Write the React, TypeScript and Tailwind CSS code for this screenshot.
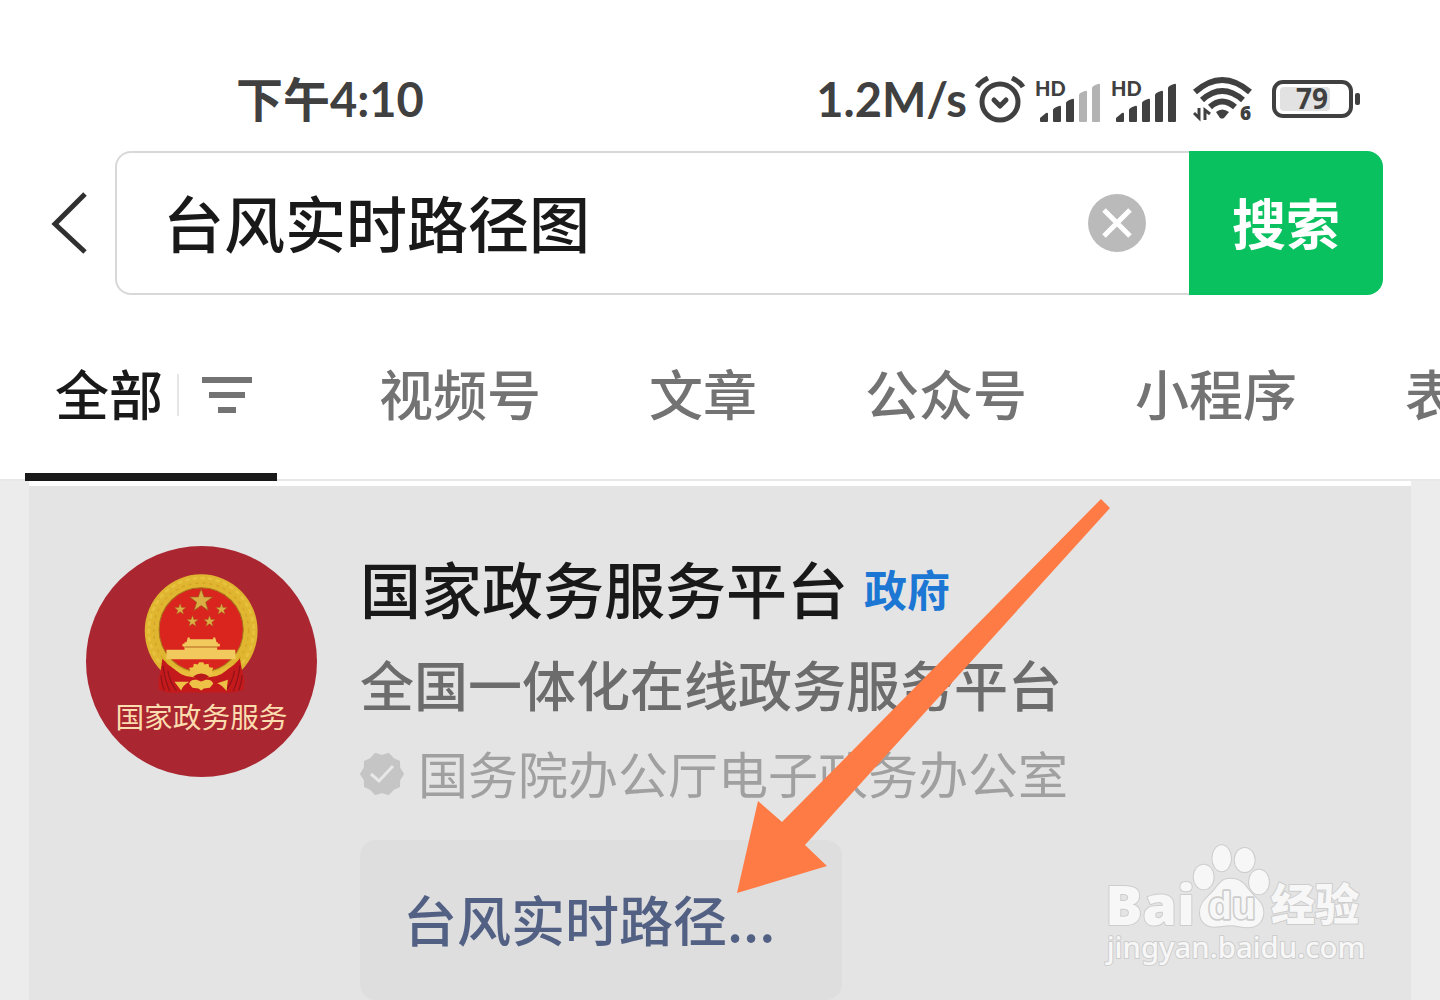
import React from 'react';

const tabs = [
    { id: '1', name: '视频号' },
    { id: '2', name: '文章' },
    { id: '3', name: '公众号' },
    { id: '4', name: '小程序' },
    { id: '5', name: '表情' },
];

const Signal = ({ bars }: { bars: number }) => {
    const shapes = [
        'M2 41v-3l6-5q2-1 2 1v7q0 1-1 1H3q-1 0-1-1z',
        'M15 41V30q0-2 6-4 2-1 2 1v14q0 1-1 1h-6q-1 0-1-1z',
        'M28 41V23q0-2 6-4 2-1 2 1v21q0 1-1 1h-6q-1 0-1-1z',
        'M41 41V15q0-2 6-4 2-1 2 1v29q0 1-1 1h-6q-1 0-1-1z',
        'M54 41V8q0-2 6-4 2-1 2 1v36q0 1-1 1h-6q-1 0-1-1z',
    ];
    return (
        <svg width="70" height="50" viewBox="-5 -5 70 50">
            {shapes.map((d, index) => (
                <path
                    key={d}
                    d={d}
                    fill={index < bars ? '#404040' : '#b3b3b3'}
                />
            ))}
            <text
                x="-3"
                y="16"
                fontFamily="Lato, sans-serif"
                fontSize="20"
                fontWeight="900"
                fill="#404040"
            >
                HD
            </text>
        </svg>
    );
};

const Alarm = () => (
    <svg
        width="50"
        height="48"
        viewBox="0 0 50 48"
        fill="none"
        stroke="#404040"
        strokeWidth="5"
    >
        <circle cx="25" cy="26" r="18" />
        <path
            d="M19 24l6 6 6-6"
            strokeLinecap="round"
            strokeLinejoin="round"
        />
        <path d="M2 11Q5 6 13 2M37 2q8 4 11 9" />
    </svg>
);

const Wifi = () => (
    <svg width="62" height="52" viewBox="0 -2 62 52">
        <g fill="none" stroke="#404040" strokeWidth="6">
            <path d="M2 16Q29-8 57 16" />
            <path d="M9 24Q29 6 50 24" />
            <path d="M17 31Q29 20 42 31" />
        </g>
        <path d="M23 36q6-5 13 0l-5 6q-2 1-4 0z" fill="#404040" />
        <path
            d="M1 37l5 5V32M12 44V34l5 4"
            fill="none"
            stroke="#404040"
            strokeWidth="3"
        />
        <text
            x="47"
            y="44"
            fontFamily="Open Sans, sans-serif"
            fontSize="19"
            fontWeight="800"
            fill="#404040"
        >
            6
        </text>
    </svg>
);

const Battery = () => (
    <svg width="90" height="40" viewBox="0 0 90 40">
        <rect
            x="3"
            y="2"
            width="77"
            height="34"
            rx="9"
            fill="none"
            stroke="#404040"
            strokeWidth="4"
        />
        <rect x="9" y="7" width="50" height="24" rx="4" fill="#e2e2e2" />
        <rect x="84" y="13" width="5" height="12" rx="2" fill="#404040" />
        <text
            x="41"
            y="29"
            textAnchor="middle"
            fontFamily="Open Sans, sans-serif"
            fontSize="28"
            fontWeight="700"
            fill="#404040"
        >
            79
        </text>
    </svg>
);

const Star = ({ x, y, r }: { x: number; y: number; r: number }) => (
    <path
        transform={`translate(${x} ${y}) scale(${r})`}
        d="M0-1L.24-.32.95-.31.38.12.59.81 0 .4-.59.81-.38.12-.95-.31-.24-.32z"
        fill="#d9ae45"
        stroke="#9c5a1c"
        strokeWidth=".06"
    />
);

const Emblem = () => (
    <svg
        viewBox="19 17 692 692"
        className="size-[231px] shrink-0"
        role="img"
        aria-label="国家政务服务"
    >
        <circle cx="365" cy="363" r="346" fill="#aa2732" />
        <circle cx="364" cy="271" r="169" fill="#e0b52f" />
        <circle
            cx="364"
            cy="270"
            r="157"
            fill="none"
            stroke="#f0d050"
            strokeWidth="8"
            strokeDasharray="14 9"
            opacity=".5"
        />
        <circle
            cx="364"
            cy="270"
            r="142"
            fill="none"
            stroke="#c8961f"
            strokeWidth="4"
            strokeDasharray="9 12"
            opacity=".5"
        />
        <circle
            cx="364"
            cy="268"
            r="126"
            fill="#d9251e"
            stroke="#a8701c"
            strokeWidth="3"
        />
        <Star x={364} y={181} r={36} />
        <Star x={301} y={207} r={18} />
        <Star x={425} y={207} r={18} />
        <Star x={338} y={243} r={18} />
        <Star x={389} y={243} r={18} />
        <path
            d="M324 291h6v5h70v-5h6l4 14h4v5h6v8h-8v10h54l2 28H260v-28h54v-10h-6v-8h6v-5h6z"
            fill="#f1c95c"
        />
        <path d="M316 318h96v3h-96z" fill="#b5651c" />
        <path
            d="M248 354q26 34 70 46 22 8 46 4 24 4 46-4 44-12 70-46 6 38 14 66-4 14-2 26-30 14-60 10H296q-34 4-60-10 2-14 0-26 8-32 12-66z"
            fill="#c51a1c"
        />
        <path
            d="M250 376q4 40 20 76M264 390q6 34 26 60M480 376q-4 40-20 76M464 390q-6 34-26 60M244 404q0 20 10 46M486 404q0 20-10 46"
            fill="none"
            stroke="#93131a"
            strokeWidth="4"
        />
        <path
            d="M272 372q44 28 92 24 48 4 92-24-30 40-72 38l-20-6-20 6q-42 2-72-38z"
            fill="#e9bd3c"
        />
        <path
            d="M332 394l-4-12 12-2 2-10 12 2 4-7h12l4 7 12-2 2 10 12 2-4 12 4 8-36 6-36-6z"
            fill="#edc247"
        />
        <path d="M340 408q24-18 48 0l-24 10z" fill="#b81a1b" />
        <path
            d="M284 424l44 0q-20 12-24 26zM444 418l-4 34q-12-18-28-24zM328 430q4-14 22-12l14 5 14-5q18-2 22 12l-10 12-18 2-8 6-8-6-18-2z"
            fill="#edc247"
        />
        <text
            x="365"
            y="562"
            textAnchor="middle"
            fontFamily="Noto Sans CJK SC, sans-serif"
            fontSize="86"
            fontWeight="400"
            fill="#fbdcae"
        >
            国家政务服务
        </text>
    </svg>
);

const Verified = () => (
    <svg width="44" height="52" viewBox="-22 -28 44 52" className="shrink-0">
        <path
            d="M0-18L6.5-20 11-15.200 17-12.400 17.200-5.900 21 0 17.200 5.900 17 12.400 11 15.200 6.500 20 0 18-6.500 20-11 15.200-17 12.400-17.200 5.900-21 0-17.200-5.900-17-12.400-11-15.200-6.500-20z"
            fill="#c5c5c5"
            stroke="#c5c5c5"
            strokeWidth="2"
            strokeLinejoin="round"
        />
        <path
            d="M-11 0l8 7L11-8"
            fill="none"
            stroke="#e8e8e8"
            strokeWidth="3"
        />
    </svg>
);

const Watermark = () => (
    <svg
        viewBox="0 0 870 450"
        className="absolute right-[31px] top-[343px] w-[290px]"
        fill="#f7f7f7"
        stroke="#cdcdcd"
        strokeWidth="6"
        strokeLinejoin="round"
        paintOrder="stroke"
    >
        <text
            x="46"
            y="287"
            fontFamily="Open Sans, sans-serif"
            fontSize="166"
            fontWeight="800"
        >
            Bai
        </text>
        <ellipse cx="341" cy="144" rx="30" ry="37" />
        <ellipse cx="395" cy="88" rx="28" ry="39" />
        <ellipse cx="464" cy="93" rx="30" ry="36" />
        <ellipse cx="507" cy="159" rx="30" ry="37" />
        <path d="M420 149c-28 0-38 24-52 40-20 20-38 34-38 62 0 26 18 42 44 42 18 0 32-4 48-4s32 6 52 6c28 0 46-18 46-46 0-30-26-42-44-66-14-20-26-34-56-34z" />
        <text
            x="355"
            y="270"
            fontFamily="Liberation Sans, sans-serif"
            fontSize="116"
            fontWeight="700"
            strokeWidth="10"
        >
            du
        </text>
        <text
            x="542"
            y="277"
            fontFamily="Noto Sans CJK SC, sans-serif"
            fontSize="133"
            fontWeight="900"
        >
            经验
        </text>
        <text
            x="50"
            y="388"
            fontFamily="Noto Sans, sans-serif"
            fontSize="88"
            fontWeight="500"
        >
            jingyan.baidu.com
        </text>
    </svg>
);

const App = () => {
    return (
        <div
            lang="zh-CN"
            className="min-h-screen overflow-hidden bg-[#ececec] font-['Noto_Sans_CJK_SC',sans-serif] font-medium"
        >
            <header className="bg-white">
                <div className="flex h-[151px] items-center justify-between pl-[236px] pr-[79px] pt-12 text-[#404040]">
                    <span className="font-['Lato','Noto_Sans_CJK_SC',sans-serif] text-[47px] font-bold leading-none">
                        下午4:10
                    </span>
                    <div className="flex items-center gap-2">
                        <span className="font-['Lato',sans-serif] text-[47px] font-bold leading-none">
                            1.2M/s
                        </span>
                        <Alarm />
                        <div className="flex items-center gap-[6px]">
                            <Signal bars={3} />
                            <Signal bars={5} />
                        </div>
                        <div className="flex items-center gap-4 pl-[6px]">
                            <Wifi />
                            <Battery />
                        </div>
                    </div>
                </div>
                <form
                    className="flex items-center pl-[51px] pr-[57px]"
                    onSubmit={(e) => e.preventDefault()}
                >
                    <button
                        type="button"
                        aria-label="返回"
                        className="w-16 shrink-0"
                    >
                        <svg
                            width="38"
                            height="62"
                            viewBox="0 0 38 62"
                            fill="none"
                            stroke="#303030"
                            strokeWidth="5"
                        >
                            <path d="M34 2L4 32l30 28" />
                        </svg>
                    </button>
                    <div className="flex h-36 flex-1 items-center rounded-l-2xl border-2 border-r-0 border-[#d8d8d8] pl-[46px] pr-[43px]">
                        <input
                            aria-label="搜索内容"
                            defaultValue="台风实时路径图"
                            className="h-24 min-w-0 flex-1 pb-1 text-[61px] text-[#191919] outline-none"
                        />
                        <button type="button" aria-label="清除">
                            <svg width="58" height="58" viewBox="0 0 58 58">
                                <circle cx="29" cy="29" r="29" fill="#bababa" />
                                <path
                                    d="M16 16l26 26M42 16L16 42"
                                    stroke="#fff"
                                    strokeWidth="5"
                                />
                            </svg>
                        </button>
                    </div>
                    <button
                        type="submit"
                        className="h-36 w-[194px] shrink-0 rounded-r-2xl bg-[#0ac160] pb-1 text-[54px] font-bold text-white"
                    >
                        搜索
                    </button>
                </form>
                <nav className="flex h-[186px] items-end overflow-hidden whitespace-nowrap pl-[25px] text-[54px] text-[#737373] shadow-[inset_0_-2px_0_#e8e8e8]">
                    <a
                        href="#all"
                        className="flex h-[136px] w-[252px] shrink-0 items-start border-b-8 border-[#191919] pl-[30px] text-[#191919]"
                    >
                        <span className="leading-[96px]">全部</span>
                        <span className="ml-[14px] mt-[29px] h-[42px] w-[2px] bg-[#e5e5e5]" />
                        <svg
                            width="50"
                            height="36"
                            viewBox="0 0 50 36"
                            fill="#737373"
                            className="ml-[23px] mt-8"
                        >
                            <path d="M0 0h50v6H0zM7 15h36v6H7zM16 30h18v6H16z" />
                        </svg>
                    </a>
                    <div className="ml-[102px] flex h-[136px] gap-[108px]">
                        {tabs.map((tab) => (
                            <a
                                key={tab.id}
                                href={`#tab-${tab.id}`}
                                className="leading-[96px]"
                            >
                                {tab.name}
                            </a>
                        ))}
                    </div>
                </nav>
            </header>
            <main className="mx-[29px] border-t-[5px] border-white bg-[#e4e4e4]">
                <article className="relative flex gap-[43px] pl-[57px] pt-[60px]">
                    <Emblem />
                    <div className="whitespace-nowrap pt-[2px]">
                        <h2 className="flex items-center gap-4 text-[61px] leading-[80px] text-[#191919]">
                            国家政务服务平台
                            <span className="text-[43px] font-bold text-[#1b77d3]">
                                政府
                            </span>
                        </h2>
                        <p className="mt-4 text-[54px] leading-[80px] text-[#6c6c6c]">
                            全国一体化在线政务服务平台
                        </p>
                        <p className="mt-4 flex items-center gap-[14px] text-[50px] font-normal leading-[64px] text-[#a0a0a0]">
                            <Verified />
                            国务院办公厅电子政务办公室
                        </p>
                        <a
                            href="#typhoon"
                            className="mt-9 flex h-40 w-[482px] items-center rounded-2xl bg-[#dedede] pb-1 pl-[43px] text-[54px] text-[#526084]"
                        >
                            台风实时路径...
                        </a>
                    </div>
                    <svg
                        width="380"
                        height="400"
                        viewBox="734 496 380 400"
                        className="absolute left-[705px] top-[10px]"
                    >
                        <path
                            d="M737 893l21-92 24 21L1101 499l9 9L805 845l22 21z"
                            fill="#ff7b45"
                        />
                    </svg>
                    <Watermark />
                </article>
            </main>
        </div>
    );
};

export default App;
